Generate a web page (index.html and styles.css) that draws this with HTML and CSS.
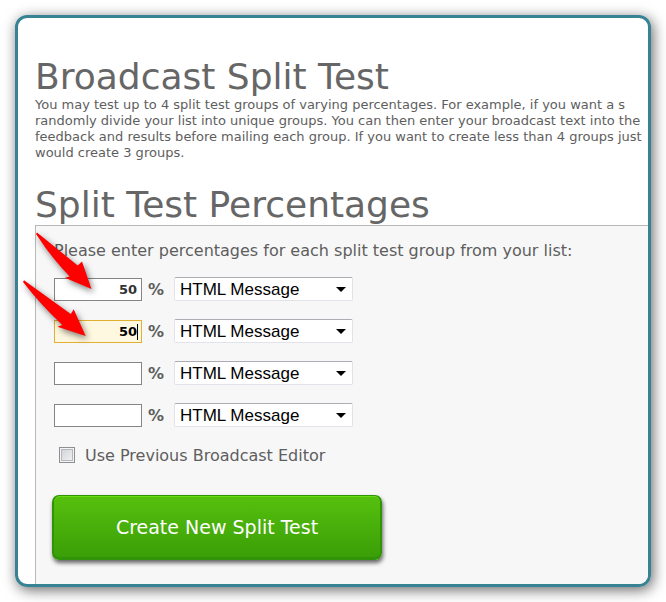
FILE: index.html
```
<!DOCTYPE html>
<html lang="en">
<head>
    <meta charset="UTF-8">
    <meta name="viewport" content="width=device-width, initial-scale=1.0">
    <title>Broadcast Split Test</title>
    <link rel="stylesheet" href="styles.css">
</head>
<body>
    <main class="frame">
        <h1>Broadcast Split Test</h1>
        <p class="intro">
            You may test up to 4 split test groups of varying percentages. For example, if you want a s<br>
            randomly divide your list into unique groups. You can then enter your broadcast text into the<br>
            feedback and results before mailing each group. If you want to create less than 4 groups just<br>
            would create 3 groups.
        </p>
        <h2>Split Test Percentages</h2>
        <form class="panel">
            <p class="hint">Please enter percentages for each split test group from your list:</p>
            <div class="group-row">
                <span class="percent"><input type="text" id="group1" value="50" aria-label="Group 1 percentage"></span>
                <label for="group1">%</label>
                <span class="message">
                    <select aria-label="Group 1 message"><option>HTML Message</option></select>
                </span>
            </div>
            <div class="group-row">
                <span class="percent active"><input type="text" id="group2" value="50" aria-label="Group 2 percentage"></span>
                <label for="group2">%</label>
                <span class="message">
                    <select aria-label="Group 2 message"><option>HTML Message</option></select>
                </span>
            </div>
            <div class="group-row">
                <span class="percent"><input type="text" id="group3" aria-label="Group 3 percentage"></span>
                <label for="group3">%</label>
                <span class="message">
                    <select aria-label="Group 3 message"><option>HTML Message</option></select>
                </span>
            </div>
            <div class="group-row">
                <span class="percent"><input type="text" id="group4" aria-label="Group 4 percentage"></span>
                <label for="group4">%</label>
                <span class="message">
                    <select aria-label="Group 4 message"><option>HTML Message</option></select>
                </span>
            </div>
            <div class="editor-row">
                <input type="checkbox" id="editor">
                <label for="editor">Use Previous Broadcast Editor</label>
            </div>
            <button type="button" class="btn">Create New Split Test</button>

            <!-- arrows pointing at the two filled groups -->
            <svg class="arrows" width="90" height="120" viewBox="16 226 90 120" aria-hidden="true">
                <path d="M37 232.5 L77.7 265.5 L82 261.5 L91.5 289 L65 277.8 L69.7 276.5 Q50 256 36 234 Z"/>
                <path d="M24 280.3 L70.8 314 L73.7 309.3 L85.7 336 L57.5 326.8 L62.3 325 Q40 304 23 282 Z"/>
            </svg>
        </form>
    </main>
</body>
</html>
```
FILE: styles.css
```
* {
    box-sizing: border-box;
}
body {
    margin: 0;
    padding: 15px;
    background: white;
    color: #5e5e5e;
    font-family: Verdana, "DejaVu Sans", sans-serif;
    font-size: 16px;
}
.frame {
    overflow: hidden;
    padding: 38px 0 0 17px;
    border: 3px solid #378394;
    border-radius: 12px;
    box-shadow: 2px 3px 14px rgba(0, 0, 0, 0.6);
}
h1, h2 {
    margin: 0;
    color: #666;
    font-size: 36px;
    font-weight: normal;
    line-height: 41px;
    white-space: nowrap;
}
.intro {
    margin: 0 0 23px;
    font-size: 13px;
    line-height: 16px;
    white-space: nowrap;
}
.panel {
    position: relative;
    padding: 15px 0 24px 18px;
    border-top: 1px solid #b8b8b8;
    border-left: 1px solid #b8b8b8;
    background: #f7f7f7;
}
.hint {
    margin: 0 0 16px;
    line-height: 20px;
    white-space: nowrap;
}
.group-row {
    display: flex;
    align-items: center;
    height: 24px;
    margin-bottom: 18px;
}
.group-row label {
    width: 32px;
    padding-left: 6px;
    font-weight: bold;
}
.percent {
    position: relative;
    width: 88px;
}
.percent input {
    display: block;
    width: 100%;
    height: 23px;
    padding: 0 4px;
    border: 1px solid #858585;
    background: white;
    color: #333;
    font: bold 13px Verdana, "DejaVu Sans", sans-serif;
    text-align: right;
}
.percent.active input {
    border-color: #e0b030;
    background: #fff8e0;
    color: black;
}
/* text cursor */
.percent.active::after {
    content: "";
    position: absolute;
    top: 4px;
    right: 4px;
    width: 1px;
    height: 16px;
    background: black;
}
.message {
    position: relative;
    width: 179px;
}
.message select {
    display: block;
    width: 100%;
    height: 24px;
    padding: 0 5px;
    border: 1px solid #e2e3ea;
    border-top-color: #abadb3;
    border-radius: 2px;
    background: white;
    color: black;
    font: 17px Arial, "Liberation Sans", sans-serif;
    appearance: none;
}
.message::after {
    content: "";
    position: absolute;
    top: 10px;
    right: 7px;
    border: 5px solid transparent;
    border-top-color: black;
    border-bottom-width: 0;
    pointer-events: none;
}
.editor-row {
    display: flex;
    align-items: center;
    gap: 10px;
    height: 20px;
    margin-bottom: 30px;
    padding-left: 5px;
}
.editor-row input {
    width: 16px;
    height: 16px;
    margin: 0;
    border: 1px solid #8e8f8f;
    background: linear-gradient(135deg, #cbcfd5, #f6f6f6);
    box-shadow: inset 0 0 0 1px #f4f4f4, inset 0 0 0 2px #b5b8bd;
    appearance: none;
}
.btn {
    display: block;
    width: 330px;
    height: 65px;
    margin-left: -2px;
    border: 2px solid #309308;
    border-top-width: 1px;
    border-bottom-width: 3px;
    border-radius: 7px;
    background: linear-gradient(#56c00e, #3a9f07);
    box-shadow: inset 0 1px 0 #66dc12, 1px 3px 4px rgba(0, 0, 0, 0.6);
    color: white;
    font: 19px Verdana, "DejaVu Sans", sans-serif;
    cursor: pointer;
}
.arrows {
    position: absolute;
    top: 0;
    left: -20px;
    fill: red;
    filter: drop-shadow(2px 3px 3px rgba(0, 0, 0, 0.5));
}
```
